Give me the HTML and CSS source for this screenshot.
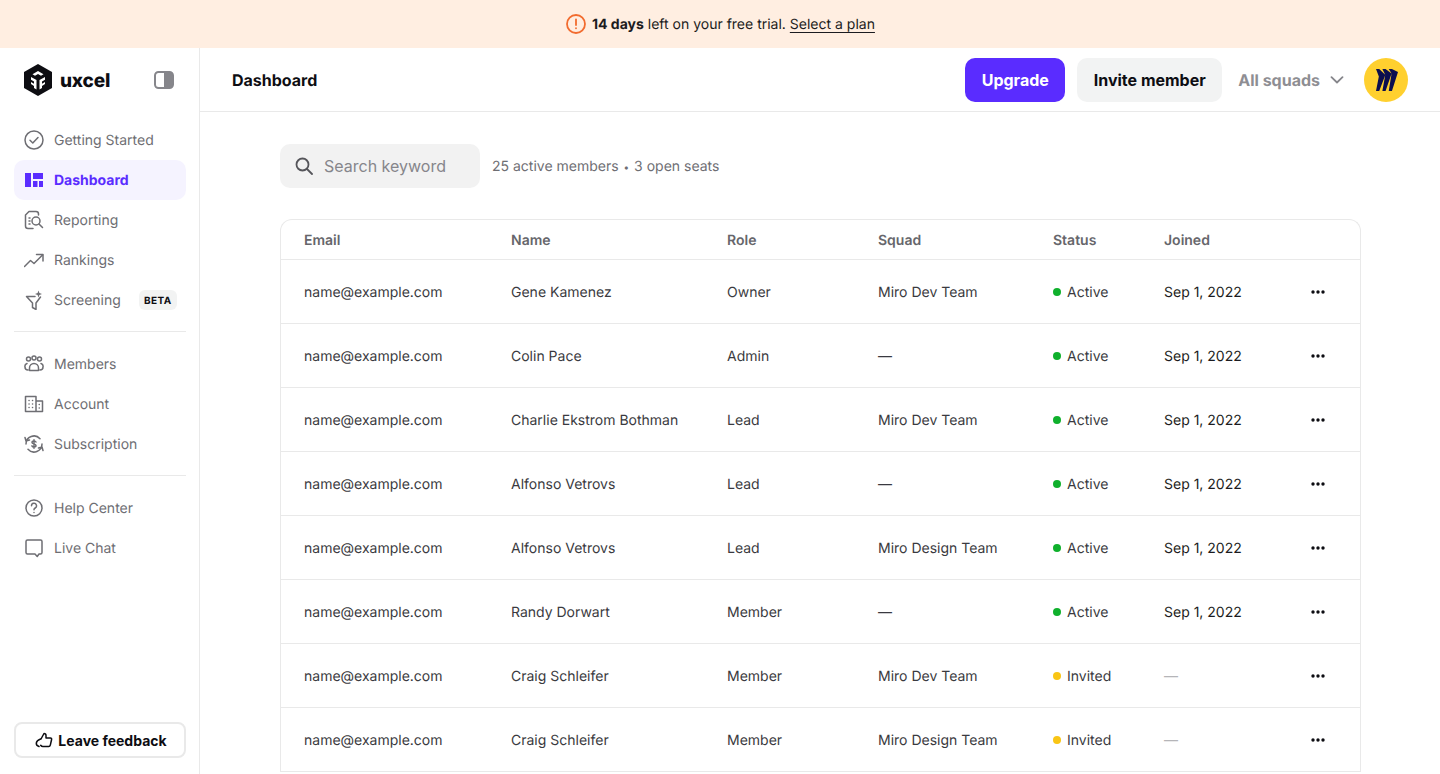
FILE: index.html
```html
<!DOCTYPE html>
<html lang="en">

<head>
    <meta charset="UTF-8" />
    <title>Dashboard</title>
    <link rel="stylesheet" href="styles.css">
</head>

<body>

    <!-- Trial banner -->
    <div class="banner">
        <svg width="20" height="20" viewBox="0 0 20 20" fill="none" stroke="#f26b2e" stroke-width="1.8" stroke-linecap="round">
            <circle cx="10" cy="10" r="9" />
            <path d="M10 5.500v5.500" />
            <path d="M10 14.200v.1" />
        </svg>
        <span><b>14 days</b> left on your free trial. <a href="#">Select a plan</a></span>
    </div>

    <div class="app">
        <!-- Sidebar -->
        <aside class="sidebar">
            <div class="brand">
                <svg width="28" height="32" viewBox="0 0 28 32">
                    <path d="M14 0l14 8v16l-14 8-14-8V8z" fill="#0d0d12" />
                    <path d="M14 7l5.500 3.200-2.500 1.500-3-1.700-3 1.700-2.500-1.500zM7 13l5.500 3v9.500L10 24v-2l-3-2v-2l3 1.700v-2.200l-3-1.700zM21 13l-5.500 3v9.500L18 24v-2l3-2v-2l-3 1.700v-2.200l3-1.700z" fill="#fff" />
                </svg>
                <span class="brand-name">uxcel</span>
                <svg class="toggle" width="20" height="18" viewBox="0 0 20 18">
                    <rect x="1" y="1" width="18" height="16" rx="3.500" fill="#fff" stroke="#86868b" stroke-width="2" />
                    <path d="M10 1h5.500A3.500 3.500 0 0 1 19 4.500v9a3.500 3.500 0 0 1-3.500 3.500H10z" fill="#86868b" />
                </svg>
            </div>

            <nav class="nav">
                <a class="nav-item" href="#">
                    <svg class="ico" viewBox="0 0 20 20"><circle cx="10" cy="10" r="9" /><path d="M6 10.300l2.800 2.700L14 7.500" /></svg>
                    Getting Started
                </a>
                <a class="nav-item active" href="#">
                    <svg class="ico-solid" viewBox="0 0 20 20"><path d="M1 3h6v14H1zM9 3h10v6H9zM9 11h4.500v6H9zM15 11h4v6h-4z" /></svg>
                    Dashboard
                </a>
                <a class="nav-item" href="#">
                    <svg class="ico" viewBox="0 0 20 20"><path d="M9 18.500H4a2.500 2.500 0 0 1-2.500-2.500V5L5 1.500h7A2.500 2.500 0 0 1 14.500 4v1" /><path d="M5 8h1M5 11h1M5 14h1" /><circle cx="12" cy="11" r="4" /><path d="M15 14l3.500 3.500" /></svg>
                    Reporting
                </a>
                <a class="nav-item" href="#">
                    <svg class="ico" viewBox="0 0 20 20"><path d="M0.500 16.500l6-6 3.500 3L18.500 5" /><path d="M12.500 4.500h6.500V11" /></svg>
                    Rankings
                </a>
                <a class="nav-item" href="#">
                    <svg class="ico" viewBox="0 0 20 20"><path d="M11 6.500H2.500l6 6.500v4.500l3.500 2V13l4.500-6" /><path class="spark" d="M14.500 0.500l.9 2.600 2.600.9-2.600.9-.9 2.600-.9-2.600-2.600-.9 2.600-.9z" /></svg>
                    Screening
                    <span class="beta">BETA</span>
                </a>
            </nav>

            <hr class="divider">

            <nav class="nav">
                <a class="nav-item" href="#">
                    <svg class="ico" viewBox="0 0 20 20"><circle cx="10" cy="4" r="2" /><circle cx="4.500" cy="5" r="2" /><circle cx="15.500" cy="5" r="2" /><path d="M5.500 16v-2a4.500 4.500 0 0 1 9 0v2.500h-9zM3 9.500A3 3 0 0 0 1 13c0 1.500 1 3 3 3M17 9.500a3 3 0 0 1 2 3.500c0 1.500-1 3-3 3" /></svg>
                    Members
                </a>
                <a class="nav-item" href="#">
                    <svg class="ico" viewBox="0 0 20 20"><path d="M1.500 2.500h10.500v15H1.500zM12 7h6.500v10.500H12zM5 6.500h.1M8.500 6.500h.1M5 10h.1M8.500 10h.1M5 13.500h.1M8.500 13.500h.1M15.200 10.500h.1M15.200 14h.1" /></svg>
                    Account
                </a>
                <a class="nav-item" href="#">
                    <svg class="ico" viewBox="0 0 20 20"><path d="M2 10a8 8 0 0 1 14-5.300M18 10a8 8 0 0 1-14 5.300M1 3.500l1 3.500 3.500-1M19 16.500L18 13l-3.500 1" /><path d="M12 8c-.4-.8-1.100-1.100-2-1.100-1.200 0-2 .6-2 1.500 0 2 4 .9 4 3.100 0 .9-.8 1.500-2 1.500-.9 0-1.700-.3-2.100-1.100M10 5.800v8.400" /></svg>
                    Subscription
                </a>
            </nav>

            <hr class="divider">

            <nav class="nav">
                <a class="nav-item" href="#">
                    <svg class="ico" viewBox="0 0 20 20"><circle cx="10" cy="10" r="8" /><path d="M7.500 7.800a2.500 2.500 0 1 1 3.700 2.200c-.8.500-1.200 1-1.200 1.800M10 14.500v.1" /></svg>
                    Help Center
                </a>
                <a class="nav-item" href="#">
                    <svg class="ico" viewBox="0 0 20 20"><path d="M3.500 2h13A1.500 1.500 0 0 1 18 3.500v11a1.500 1.500 0 0 1-1.500 1.500H15l-1.800 2.500L11 16H3.500A1.500 1.500 0 0 1 2 14.500v-11A1.500 1.500 0 0 1 3.500 2z" /></svg>
                    Live Chat
                </a>
            </nav>

            <button class="feedback">
                <svg width="18" height="18" viewBox="0 0 18 18" fill="none" stroke="#0d0d12" stroke-width="1.500" stroke-linejoin="round" stroke-linecap="round">
                    <path d="M6 8l3-5.500c1.200 0 2 .8 2 2V7h4.500c.8 0 1.300.7 1.100 1.500l-1.300 5.700c-.2.800-.8 1.300-1.600 1.300H8c-1 0-1.800-.5-2.300-1.200" />
                    <path d="M5.500 8C3 9 1.500 10.500 1.300 12c-.1 1.500 1 3 2.700 3.500" />
                </svg>
                Leave feedback
            </button>
        </aside>

        <main class="main">
            <header class="topbar">
                <h1>Dashboard</h1>
                <div class="topbar-actions">
                    <button class="btn btn-primary">Upgrade</button>
                    <button class="btn btn-light">Invite member</button>
                    <div class="squads">
                        All squads
                        <svg width="14" height="8" viewBox="0 0 14 8" fill="none" stroke="#86868b" stroke-width="1.800" stroke-linecap="round" stroke-linejoin="round"><path d="M1.500 1.200L7 6.500l5.500-5.300" /></svg>
                    </div>
                    <div class="avatar">
                        <svg width="22" height="22" viewBox="0 0 24 24" fill="#0b0e4f">
                            <path d="M17.392 0H13.900L17 4.808 10.444 0H6.949l3.102 6.300L3.504 0H0l3.102 8.048L0 24h3.504l6.547-17.300L6.949 24h3.495L17 4.808 13.900 24h3.492L24 3.272 17.392 0z" />
                        </svg>
                    </div>
                </div>
            </header>

            <div class="content">
                <div class="toolbar">
                    <label class="search">
                        <svg width="18" height="18" viewBox="0 0 18 18" fill="none" stroke="#55555a" stroke-width="1.800" stroke-linecap="round"><circle cx="7.500" cy="7.500" r="6" /><path d="M12 12l5 5" /></svg>
                        <input type="text" placeholder="Search keyword">
                    </label>
                    <span class="seats">25 active members <span class="sep">•</span> 3 open seats</span>
                </div>

                <div class="members">
                    <div class="row head">
                        <div>Email</div><div>Name</div><div>Role</div><div>Squad</div><div>Status</div><div>Joined</div><div></div>
                    </div>
                    <div class="row">
                        <div>name@example.com</div><div>Gene Kamenez</div><div>Owner</div><div>Miro Dev Team</div>
                        <div class="status"><i class="dot green"></i>Active</div><div class="joined">Sep 1, 2022</div>
                        <svg class="more" width="14" height="4" viewBox="0 0 14 4"><circle cx="2" cy="2" r="1.700" /><circle cx="7" cy="2" r="1.700" /><circle cx="12" cy="2" r="1.700" /></svg>
                    </div>
                    <div class="row">
                        <div>name@example.com</div><div>Colin Pace</div><div>Admin</div><div>—</div>
                        <div class="status"><i class="dot green"></i>Active</div><div class="joined">Sep 1, 2022</div>
                        <svg class="more" width="14" height="4" viewBox="0 0 14 4"><circle cx="2" cy="2" r="1.700" /><circle cx="7" cy="2" r="1.700" /><circle cx="12" cy="2" r="1.700" /></svg>
                    </div>
                    <div class="row">
                        <div>name@example.com</div><div>Charlie Ekstrom Bothman</div><div>Lead</div><div>Miro Dev Team</div>
                        <div class="status"><i class="dot green"></i>Active</div><div class="joined">Sep 1, 2022</div>
                        <svg class="more" width="14" height="4" viewBox="0 0 14 4"><circle cx="2" cy="2" r="1.700" /><circle cx="7" cy="2" r="1.700" /><circle cx="12" cy="2" r="1.700" /></svg>
                    </div>
                    <div class="row">
                        <div>name@example.com</div><div>Alfonso Vetrovs</div><div>Lead</div><div>—</div>
                        <div class="status"><i class="dot green"></i>Active</div><div class="joined">Sep 1, 2022</div>
                        <svg class="more" width="14" height="4" viewBox="0 0 14 4"><circle cx="2" cy="2" r="1.700" /><circle cx="7" cy="2" r="1.700" /><circle cx="12" cy="2" r="1.700" /></svg>
                    </div>
                    <div class="row">
                        <div>name@example.com</div><div>Alfonso Vetrovs</div><div>Lead</div><div>Miro Design Team</div>
                        <div class="status"><i class="dot green"></i>Active</div><div class="joined">Sep 1, 2022</div>
                        <svg class="more" width="14" height="4" viewBox="0 0 14 4"><circle cx="2" cy="2" r="1.700" /><circle cx="7" cy="2" r="1.700" /><circle cx="12" cy="2" r="1.700" /></svg>
                    </div>
                    <div class="row">
                        <div>name@example.com</div><div>Randy Dorwart</div><div>Member</div><div>—</div>
                        <div class="status"><i class="dot green"></i>Active</div><div class="joined">Sep 1, 2022</div>
                        <svg class="more" width="14" height="4" viewBox="0 0 14 4"><circle cx="2" cy="2" r="1.700" /><circle cx="7" cy="2" r="1.700" /><circle cx="12" cy="2" r="1.700" /></svg>
                    </div>
                    <div class="row">
                        <div>name@example.com</div><div>Craig Schleifer</div><div>Member</div><div>Miro Dev Team</div>
                        <div class="status"><i class="dot yellow"></i>Invited</div><div class="joined none">—</div>
                        <svg class="more" width="14" height="4" viewBox="0 0 14 4"><circle cx="2" cy="2" r="1.700" /><circle cx="7" cy="2" r="1.700" /><circle cx="12" cy="2" r="1.700" /></svg>
                    </div>
                    <div class="row">
                        <div>name@example.com</div><div>Craig Schleifer</div><div>Member</div><div>Miro Design Team</div>
                        <div class="status"><i class="dot yellow"></i>Invited</div><div class="joined none">—</div>
                        <svg class="more" width="14" height="4" viewBox="0 0 14 4"><circle cx="2" cy="2" r="1.700" /><circle cx="7" cy="2" r="1.700" /><circle cx="12" cy="2" r="1.700" /></svg>
                    </div>
                </div>
            </div>
        </main>
    </div>

</body>

</html>
```

FILE: styles.css
```css
* {
    box-sizing: border-box;
}

html,
body {
    height: 100%;
}

body {
    margin: 0;
    font-family: Inter, "Liberation Sans", sans-serif;
    font-size: 14px;
    color: #3a3a40;
    background: #fff;
    overflow: hidden;
    text-rendering: geometricPrecision;
}

a {
    color: inherit;
    text-decoration: none;
}

button {
    font-family: inherit;
    cursor: pointer;
}

/* Banner */
.banner {
    height: 48px;
    background: #ffeee1;
    display: flex;
    justify-content: center;
    align-items: center;
    gap: 6px;
    color: #1b1b20;
    line-height: 18px;
}

.banner svg {
    margin-left: 1px;
}

.banner span {
    margin-top: 2px;
}

.banner b {
    font-weight: 700;
}

.banner a {
    text-decoration: underline;
    text-underline-offset: 3px;
}

.app {
    display: flex;
    height: 726px;
}

/* Sidebar */
.sidebar {
    width: 200px;
    flex: none;
    border-right: 1px solid #e9e9e9;
    padding: 0 13px 16px 14px;
    display: flex;
    flex-direction: column;
}

.brand {
    height: 64px;
    margin-bottom: 8px;
    padding: 0 12px 0 10px;
    display: flex;
    align-items: center;
    gap: 8px;
}

.brand-name {
    font-size: 19px;
    font-weight: 800;
    color: #0d0d12;
    letter-spacing: -0.2px;
}

.toggle {
    margin-left: auto;
}

.nav-item {
    height: 40px;
    padding: 2px 10px 0;
    display: flex;
    align-items: center;
    gap: 10px;
    border-radius: 10px;
    color: #6e6e73;
    line-height: 18px;
}

.nav-item.active {
    background: #f5f3ff;
    color: #5a2cff;
    font-weight: 700;
}

.ico,
.ico-solid {
    width: 20px;
    height: 20px;
    margin-bottom: 2px;
    flex: none;
}

.ico {
    fill: none;
    stroke: #6e6e73;
    stroke-width: 1.500;
    stroke-linecap: round;
    stroke-linejoin: round;
}

.ico .spark {
    fill: #6e6e73;
    stroke: none;
}

.ico-solid {
    fill: #5a2cff;
}

.beta {
    margin: 0 0 2px 8px;
    padding: 0 5px;
    height: 20px;
    line-height: 22px;
    border-radius: 6px;
    background: #f2f3f3;
    color: #0d0d12;
    font-size: 10px;
    font-weight: 700;
    letter-spacing: 0.5px;
}

.divider {
    margin: 11px 0 12px;
    border: 0;
    border-top: 1px solid #e9e9e9;
    width: 172px;
}

.feedback {
    margin-top: auto;
    width: 172px;
    height: 36px;
    padding: 2px 0 0 2px;
    background: #fff;
    border: 2px solid #e9e9e9;
    border-radius: 8px;
    display: flex;
    justify-content: center;
    align-items: center;
    gap: 5px;
    font-size: 14px;
    font-weight: 700;
    line-height: 18px;
    color: #0d0d12;
}

.feedback svg {
    margin-bottom: 2px;
}

/* Header */
.main {
    flex: 1;
    min-width: 0;
}

.topbar {
    height: 64px;
    border-bottom: 1px solid #e9e9e9;
    padding: 0 32px;
    display: flex;
    justify-content: space-between;
    align-items: center;
}

.topbar h1 {
    margin: 0;
    font-size: 16px;
    font-weight: 700;
    color: #0d0d12;
}

.topbar-actions {
    display: flex;
    align-items: center;
    gap: 12px;
}

.btn {
    height: 44px;
    padding: 0;
    border: none;
    border-radius: 10px;
    font-size: 16px;
    font-weight: 700;
}

.btn-primary {
    width: 100px;
    background: #5a2cff;
    color: #fff;
}

.btn-light {
    width: 145px;
    background: #f2f3f3;
    color: #0d0d12;
}

.squads {
    margin-left: 4px;
    display: flex;
    align-items: center;
    gap: 10px;
    font-size: 16px;
    font-weight: 700;
    color: #8e8e93;
}

.avatar {
    margin-left: 8px;
    padding-left: 2px;
    width: 44px;
    height: 44px;
    border-radius: 50%;
    background: #ffd02f;
    display: flex;
    justify-content: center;
    align-items: center;
}

/* Content */
.content {
    padding: 32px 79px 0 80px;
}

.toolbar {
    display: flex;
    align-items: center;
    gap: 12px;
    margin-bottom: 31px;
}

.search {
    width: 200px;
    height: 44px;
    padding: 0 15px;
    border-radius: 10px;
    background: #f2f2f2;
    display: flex;
    align-items: center;
    gap: 11px;
}

.search input {
    width: 130px;
    border: none;
    outline: none;
    background: transparent;
    padding: 0;
    font-family: inherit;
    font-size: 16px;
}

.search input::placeholder {
    color: #86868b;
    opacity: 1;
}

.seats {
    margin-top: 2px;
    color: #6e6e73;
    line-height: 18px;
}

.sep {
    margin: 0 1px;
    font-size: 10px;
}

.members {
    border: 1px solid #e9e9e9;
    border-bottom: none;
    border-radius: 12px 12px 0 0;
}

.row {
    height: 64px;
    padding: 2px 23px 0 23px;
    display: grid;
    grid-template-columns: 207px 216px 151px 175px 111px 146px 1fr;
    align-items: center;
    border-bottom: 1px solid #e9e9e9;
}

.row.head {
    height: 40px;
    font-weight: 600;
    color: #66666b;
}

.status {
    display: flex;
    align-items: center;
    gap: 6px;
}

.dot {
    width: 8px;
    height: 8px;
    margin-bottom: 1px;
    border-radius: 50%;
}

.green {
    background: #0fb02c;
}

.yellow {
    background: #f9c515;
}

.joined {
    color: #1b1b20;
}

.joined.none {
    color: #b5b5b8;
}

.more {
    margin: 0 0 2px 1px;
    fill: #0d0d12;
}
```
